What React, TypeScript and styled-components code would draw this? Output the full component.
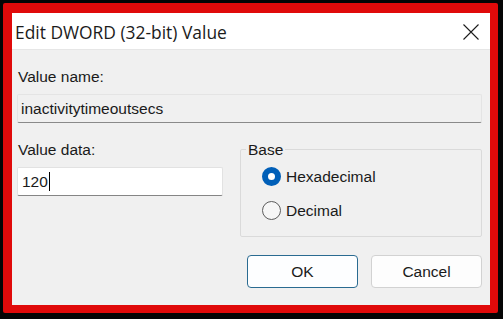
import styled, { createGlobalStyle } from "styled-components";

const GlobalStyle = createGlobalStyle`
	html, body {
		margin: 0;
		padding: 0;
		background: #000;
	}
	* {
		box-sizing: border-box;
	}
`;

const Frame = styled.div`
	width: 503px;
	height: 319px;
	background: #050505;
	padding: 3px 5px 6px 3px;
`;

const RedBorder = styled.div`
	height: 100%;
	background: #e00a0a;
	border-radius: 2px;
	padding: 10px 8px 8px 9px;
`;

const Dialog = styled.div`
	height: 100%;
	display: flex;
	flex-direction: column;
	background: #f0f0f0;
	font-family: "Liberation Sans", Arial, sans-serif;
	color: #1a1a1a;
`;

const TitleBar = styled.div`
	height: 37px;
	flex: none;
	display: flex;
	align-items: center;
	justify-content: space-between;
	background: #ffffff;
	border-bottom: 1px solid #e6e6e6;
	padding: 0 11px 0 3px;
`;

const Title = styled.span`
	font-family: "Open Sans", "Noto Sans", sans-serif;
	font-size: 17.4px;
	color: #1b1b1b;
	margin-top: 1px;
`;

const CloseButton = styled.button`
	width: 16px;
	height: 16px;
	padding: 0;
	border: 0;
	background: transparent;
	display: flex;
	margin-top: 2px;
`;

const Body = styled.div`
	flex: 1;
	display: flex;
	flex-direction: column;
	padding: 17px 8px 0 5px;
`;

const Label = styled.div`
	font-size: 15.5px;
	line-height: 19px;
	padding-left: 1px;
`;

const NameField = styled.div`
	height: 29px;
	margin-top: 8px;
	display: flex;
	align-items: center;
	padding-left: 3px;
	font-size: 15.5px;
	background: #f0f0f0;
	border: 1px solid #e4e4e4;
	border-bottom-color: #8a8a8a;
	border-radius: 2px;
`;

const Row = styled.div`
	display: flex;
	margin-top: 17px;
`;

const LeftColumn = styled.div`
	width: 206px;
	display: flex;
	flex-direction: column;
`;

const DataInput = styled.div`
	height: 29px;
	margin-top: 8px;
	display: flex;
	align-items: center;
	padding-left: 4px;
	font-size: 15.5px;
	background: #ffffff;
	border: 1px solid #e2e2e2;
	border-bottom-color: #858585;
	border-radius: 2px;
`;

const Caret = styled.span`
	width: 1px;
	height: 19px;
	background: #000;
	margin-left: 1px;
`;

const GroupBox = styled.fieldset`
	width: 242px;
	height: 97px;
	margin: 0 0 0 17px;
	padding: 0;
	border: 1px solid #dadada;
	border-radius: 2px;
	display: flex;
	flex-direction: column;
	gap: 15px;
`;

const Legend = styled.legend`
	font-size: 15.5px;
	line-height: 19px;
	padding: 0 2px;
	margin-left: 5px;
`;

const RadioRow = styled.label`
	display: flex;
	align-items: center;
	gap: 5px;
	margin-left: 21px;
	font-size: 15.5px;
	line-height: 19px;
	&:first-of-type {
		margin-top: 8px;
	}
`;

const RadioCircle = styled.span<{ $checked?: boolean }>`
	width: 19px;
	height: 19px;
	border-radius: 50%;
	flex: none;
	background: ${(p) => (p.$checked ? "#ffffff" : "#f6f6f6")};
	border: ${(p) => (p.$checked ? "6px solid #005fb8" : "1px solid #5c5c5c")};
`;

const ButtonRow = styled.div`
	display: flex;
	justify-content: flex-end;
	gap: 13px;
	margin-top: 18px;
`;

const Button = styled.button<{ $primary?: boolean }>`
	width: 111px;
	height: 33px;
	font-family: "Liberation Sans", Arial, sans-serif;
	font-size: 15.5px;
	color: #1a1a1a;
	border-radius: 4px;
	background: ${(p) => (p.$primary ? "#fdfeff" : "#fdfdfd")};
	border: 1px solid ${(p) => (p.$primary ? "#2a6b91" : "#d2d2d2")};
`;

export default function App() {
	return (
		<>
			<GlobalStyle />
			<Frame>
				<RedBorder>
					<Dialog>
						<TitleBar>
							<Title>Edit DWORD (32-bit) Value</Title>
							<CloseButton aria-label="Close">
								<svg width="16" height="16" viewBox="0 0 16 16">
									<path d="M0.5 0.5 L15.5 15.5 M15.5 0.5 L0.5 15.5" stroke="#1b1b1b" strokeWidth="1.1" />
								</svg>
							</CloseButton>
						</TitleBar>
						<Body>
							<Label>Value name:</Label>
							<NameField>inactivitytimeoutsecs</NameField>
							<Row>
								<LeftColumn>
									<Label>Value data:</Label>
									<DataInput>
										120
										<Caret />
									</DataInput>
								</LeftColumn>
								<GroupBox>
									<Legend>Base</Legend>
									<RadioRow>
										<RadioCircle $checked />
										Hexadecimal
									</RadioRow>
									<RadioRow>
										<RadioCircle />
										Decimal
									</RadioRow>
								</GroupBox>
							</Row>
							<ButtonRow>
								<Button $primary>OK</Button>
								<Button>Cancel</Button>
							</ButtonRow>
						</Body>
					</Dialog>
				</RedBorder>
			</Frame>
		</>
	);
}
